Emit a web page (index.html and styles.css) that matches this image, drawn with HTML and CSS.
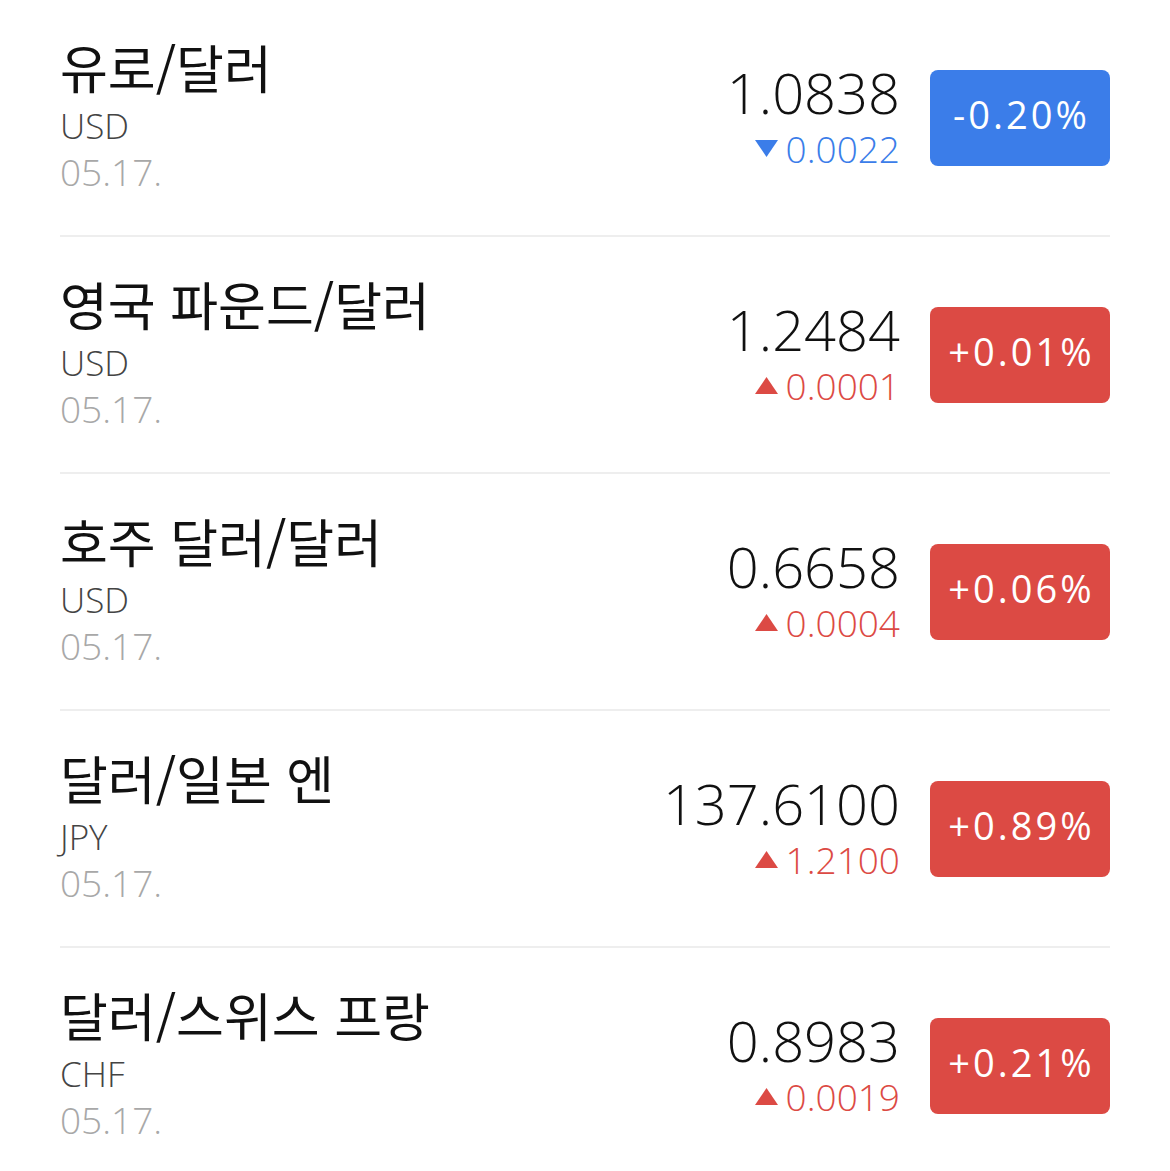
FILE: index.html
```html
<!DOCTYPE html>
<html lang="ko">
<head>
<meta charset="utf-8">
<link rel="stylesheet" href="styles.css">
</head>
<body>
<ul class="list">
  <li class="row">
    <div class="info">
      <div class="name">유로/달러</div>
      <div class="code">USD</div>
      <div class="date">05.17.</div>
    </div>
    <div class="quote">
      <div class="price">1.0838</div>
      <div class="change down"><svg class="tri" viewBox="0 0 23 17"><path d="M0 0H23L11.5 17Z"/></svg>0.0022</div>
    </div>
    <div class="badge down">-0.20%</div>
  </li>
  <li class="row">
    <div class="info">
      <div class="name">영국 파운드/달러</div>
      <div class="code">USD</div>
      <div class="date">05.17.</div>
    </div>
    <div class="quote">
      <div class="price">1.2484</div>
      <div class="change up"><svg class="tri" viewBox="0 0 23 17"><path d="M11.5 0L23 17H0Z"/></svg>0.0001</div>
    </div>
    <div class="badge up">+0.01%</div>
  </li>
  <li class="row">
    <div class="info">
      <div class="name">호주 달러/달러</div>
      <div class="code">USD</div>
      <div class="date">05.17.</div>
    </div>
    <div class="quote">
      <div class="price">0.6658</div>
      <div class="change up"><svg class="tri" viewBox="0 0 23 17"><path d="M11.5 0L23 17H0Z"/></svg>0.0004</div>
    </div>
    <div class="badge up">+0.06%</div>
  </li>
  <li class="row">
    <div class="info">
      <div class="name">달러/일본 엔</div>
      <div class="code">JPY</div>
      <div class="date">05.17.</div>
    </div>
    <div class="quote">
      <div class="price">137.6100</div>
      <div class="change up"><svg class="tri" viewBox="0 0 23 17"><path d="M11.5 0L23 17H0Z"/></svg>1.2100</div>
    </div>
    <div class="badge up">+0.89%</div>
  </li>
  <li class="row">
    <div class="info">
      <div class="name">달러/스위스 프랑</div>
      <div class="code">CHF</div>
      <div class="date">05.17.</div>
    </div>
    <div class="quote">
      <div class="price">0.8983</div>
      <div class="change up"><svg class="tri" viewBox="0 0 23 17"><path d="M11.5 0L23 17H0Z"/></svg>0.0019</div>
    </div>
    <div class="badge up">+0.21%</div>
  </li>
</ul>
</body>
</html>
```
FILE: styles.css
```css
html, body {
  margin: 0;
  padding: 0;
  background: #ffffff;
}
body {
  font-family: "Open Sans", "Noto Sans CJK KR", sans-serif;
  color: #111111;
}
.list {
  list-style: none;
  margin: 0;
  padding: 0 60px;
}
.row {
  display: flex;
  align-items: center;
  height: 235px;
  border-bottom: 2px solid #eeeeee;
}
.row:last-child {
  border-bottom: none;
}
.info {
  flex: 1;
  display: flex;
  flex-direction: column;
  padding-bottom: 5px;
}
.name {
  font-family: "Noto Sans CJK KR", sans-serif;
  font-size: 52px;
  line-height: 62px;
  font-weight: 400;
  color: #111111;
}
.code {
  margin-top: 5px;
  font-size: 35px;
  line-height: 46px;
  font-weight: 300;
  color: #444444;
}
.date {
  font-size: 37px;
  line-height: 46px;
  font-weight: 300;
  color: #a8a8a8;
}
.quote {
  display: flex;
  flex-direction: column;
  align-items: flex-end;
}
.price {
  font-size: 56px;
  line-height: 52px;
  font-weight: 300;
  color: #111111;
}
.change {
  margin-top: 10px;
  display: flex;
  align-items: center;
  font-size: 37px;
  line-height: 42px;
  font-weight: 300;
}
.tri {
  width: 23px;
  height: 17px;
  margin-right: 8px;
  fill: currentColor;
}
.change.up { color: #dc4a44; }
.change.down { color: #3b7de9; }
.badge {
  width: 180px;
  height: 96px;
  margin-left: 30px;
  border-radius: 8px;
  display: flex;
  align-items: center;
  justify-content: center;
  color: #ffffff;
  font-size: 38px;
  font-weight: 500;
  letter-spacing: 3px;
  padding-left: 3px;
  padding-bottom: 7px;
  box-sizing: border-box;
}
.badge.up { background: #dc4a44; }
.badge.down { background: #3b7de9; }
```
